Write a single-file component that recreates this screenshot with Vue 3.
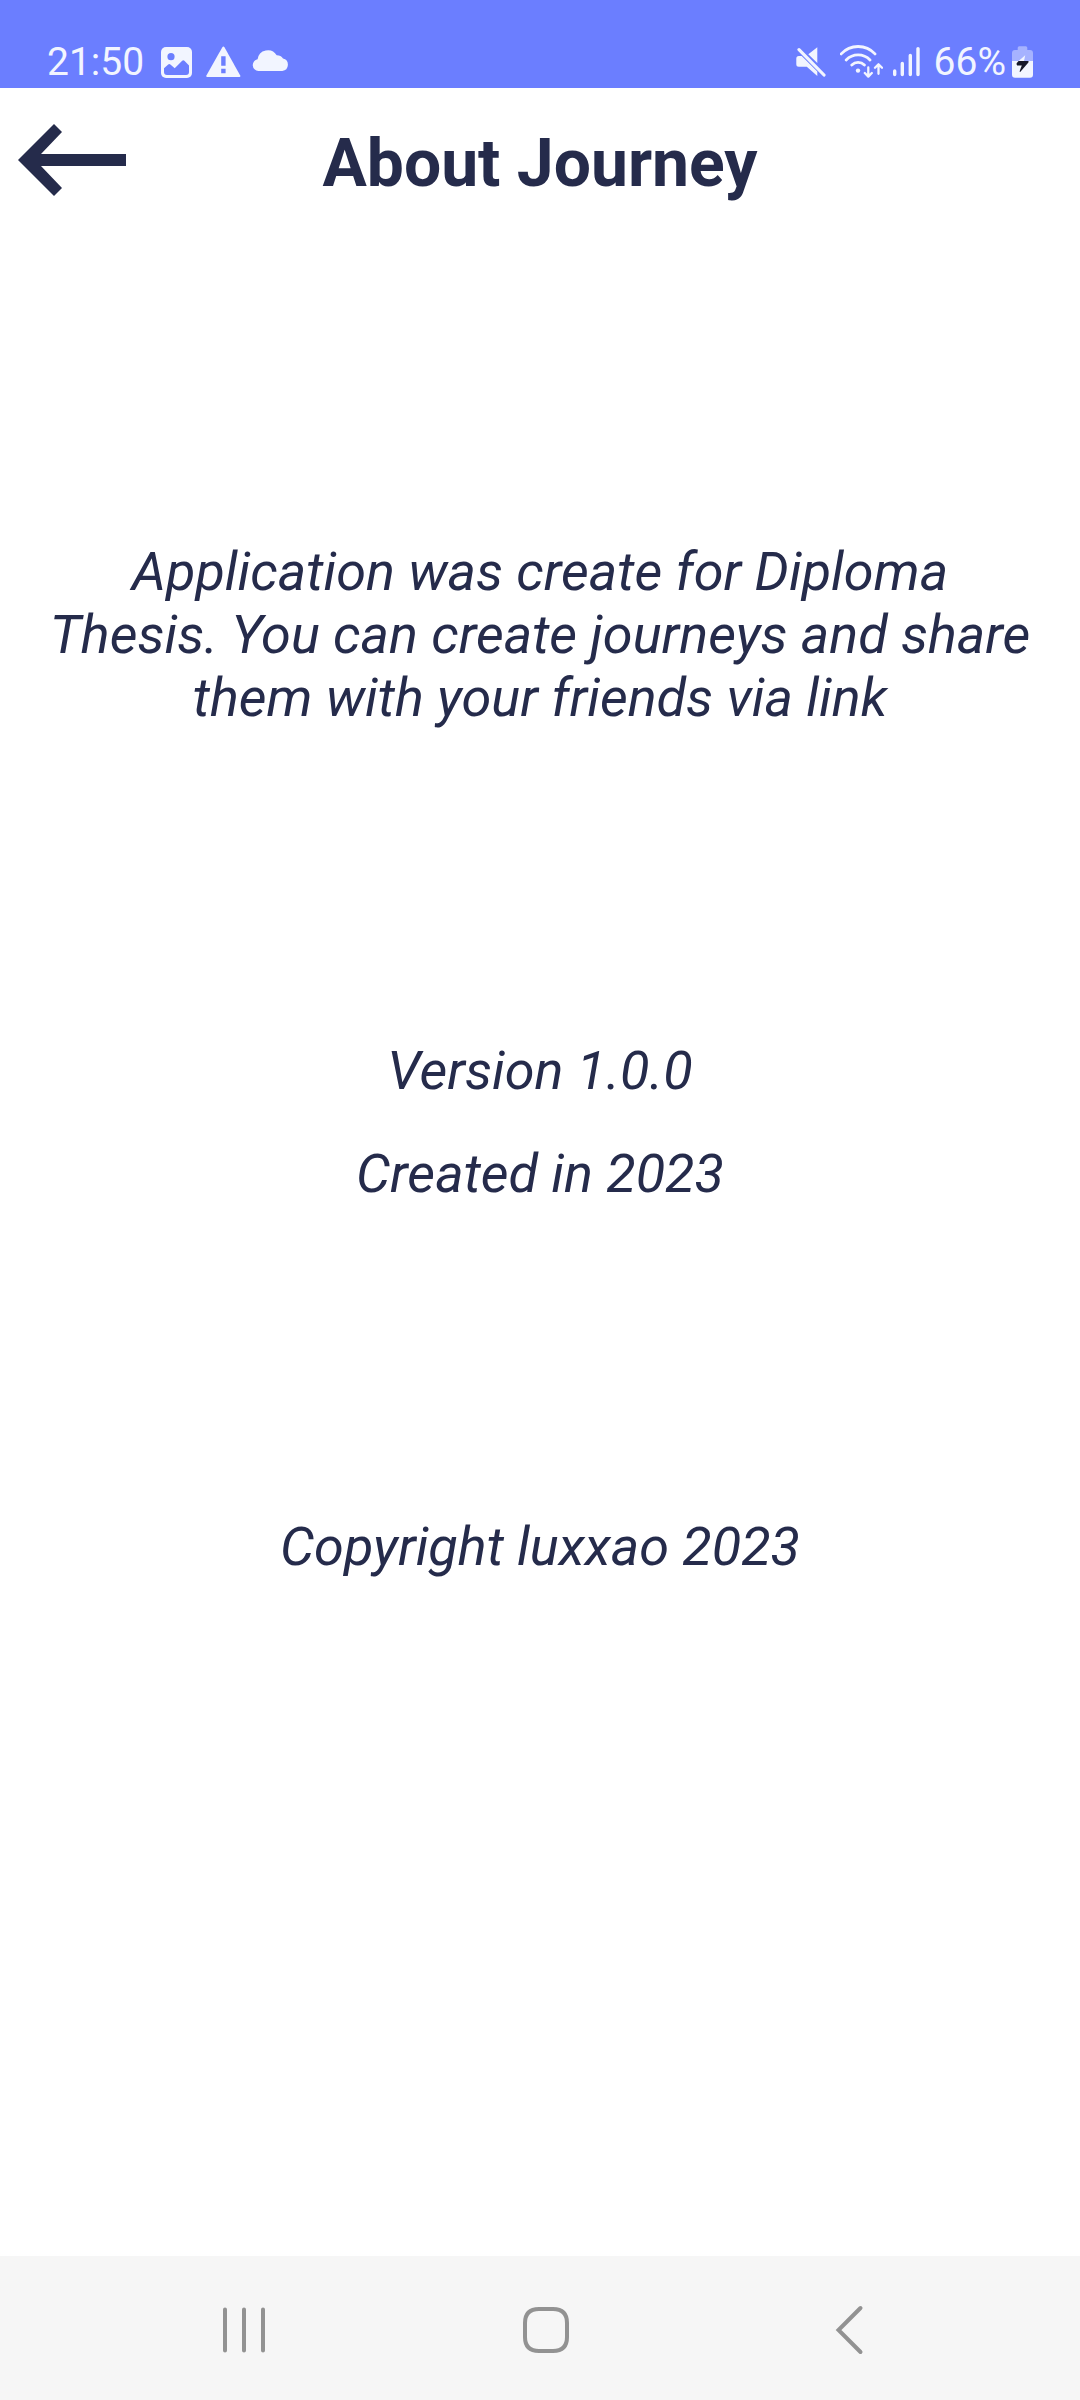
<script setup>
const facts = ['Version 1.0.0', 'Created in 2023']
</script>

<template>
  <div class="screen">
    <div class="status">
      <div class="group">
        <span class="label">21:50</span>
        <svg class="photo" width="31" height="34" viewBox="0 0 31 34" aria-hidden="true">
          <rect class="ink" y="2" width="31" height="31" rx="5" />
          <circle class="cut" cx="10" cy="11.7" r="3.6" />
          <path class="cut" d="M3 23.3 7.2 19.4Q8.3 18.4 9.4 19.4L13.7 23.3 21.2 15.8Q22.3 14.8 23.4 15.8L28 20.5V27Q28 30 25 30H6Q3 30 3 27Z" />
        </svg>
        <svg class="alert" width="35" height="34" viewBox="0 0 35 34" aria-hidden="true">
          <path class="ink" d="M16.2 2.4Q17.4.6 18.6 2.4L34.2 30.4Q34.8 32 33.4 32H1.2Q0 32 .4 30.4Z" />
          <path class="cut" d="M15.2 11.3h4.4v9.4h-4.4zM15.2 23.8h4.4v4.4h-4.4z" />
        </svg>
        <svg class="cloud" width="37" height="34" viewBox="0 0 37 34" aria-hidden="true">
          <path class="ink" d="M6.4 26A5.9 5.9 0 0 1 5.6 14.3 10.3 10.3 0 0 1 24.7 10.3 7.4 7.4 0 0 1 31 13.6 6.3 6.3 0 0 1 30.3 26Z" />
        </svg>
      </div>
      <div class="group">
        <svg width="30" height="34" viewBox="0 0 30 34" aria-hidden="true">
          <path class="ink" d="M21.3 2.3v15.6L12.3 9.3ZM2.8 11H5.7L21.3 26.4V31L10.8 21.7H2.8Q.3 21.7.3 19.2V13.5Q.3 11 2.8 11Z" />
          <path class="line" d="M3 4.6 28 30" stroke-width="3.2" />
        </svg>
        <svg class="wifi" width="43" height="34" viewBox="0 0 43 34" aria-hidden="true">
          <circle class="ink" cx="18" cy="25.6" r="2.2" />
          <path class="line" d="M1.2 8.9A23 23 0 0 1 35 8.9M6.2 15A16.5 16.5 0 0 1 30 15M11.8 20A9 9 0 0 1 24.4 20" stroke-width="2.8" />
          <path class="line" d="M28.3 22.5V31.5M24.8 28 28.3 31.6 31.8 28M38.5 28.8V19.3M35 22.8 38.5 19.2 42 22.8" stroke-width="2.3" />
        </svg>
        <svg class="signal" width="28" height="34" viewBox="0 0 28 34" aria-hidden="true">
          <path class="line" d="M2.7 26V29.6M10.3 18.4V29.6M18.3 10.4V29.6M26 3.6V29.6" stroke-width="3.4" />
        </svg>
        <span class="label level">66%</span>
        <svg class="battery" width="21" height="34" viewBox="0 0 21 34" aria-hidden="true">
          <path class="faded" d="M5.7 5V2.8Q5.7 1.3 7.2 1.3H13.8Q15.3 1.3 15.3 2.8V5H18Q21 5 21 8V16H0V8Q0 5 3 5Z" />
          <path class="ink" d="M0 16H21V29.7Q21 32.7 18 32.7H3Q0 32.7 0 29.7Z" />
          <path class="ink" d="M13.2 10.3 6.6 16H12Z" />
          <path class="bolt" d="M6.6 16H16.2Q17 16.4 16.4 17.4L8.2 27Q7.4 27 7.7 26L9.8 20.6H5.2Q4.2 19.6 4.8 18Z" />
        </svg>
      </div>
    </div>

    <header class="header">
      <button class="back" type="button" aria-label="Back">
        <svg width="108" height="72" viewBox="0 0 108 72">
          <path d="M0 36 36 0 44 8 23 30H108V42H23L44 64 36 72Z" />
        </svg>
      </button>
      <h1>About Journey</h1>
    </header>

    <main class="about">
      <p>Application was create for Diploma Thesis. You can create journeys and share them with your friends via link</p>
      <div class="facts">
        <p v-for="fact in facts" :key="fact">{{ fact }}</p>
      </div>
      <p>Copyright luxxao 2023</p>
    </main>

    <nav class="nav">
      <button type="button" aria-label="Recent apps">
        <svg width="48" height="50" viewBox="0 0 48 50"><path d="M5 4.5V45.5M24 4.5V45.5M43 4.5V45.5" /></svg>
      </button>
      <button type="button" aria-label="Home">
        <svg width="48" height="50" viewBox="0 0 48 50"><path d="M17 4H31Q45 4 45 18V32Q45 46 31 46H17Q3 46 3 32V18Q3 4 17 4Z" /></svg>
      </button>
      <button type="button" aria-label="Back">
        <svg width="48" height="50" viewBox="0 0 48 50"><path d="M35.5 3 13.5 25 35.5 47" /></svg>
      </button>
    </nav>
  </div>
</template>

<style>
body {
  margin: 0;
}
</style>

<style scoped>
.screen {
  display: flex;
  flex-direction: column;
  min-height: 100vh;
  background: #fff;
  color: #252b4b;
  font-family: Roboto, sans-serif;
}

.status {
  display: flex;
  justify-content: space-between;
  padding: 36px 47px 0;
  background: #6b7eff;
  color: #f2f5ff;
}

.group {
  display: flex;
  align-items: center;
}

.label {
  font-size: 39px;
  line-height: 52px;
}

.ink {
  fill: #f2f5ff;
}

.cut {
  fill: #6b7eff;
}

.faded {
  fill: #a6b2ff;
}

.bolt {
  fill: #16182a;
}

.line {
  fill: none;
  stroke: #f2f5ff;
  stroke-linecap: round;
  stroke-linejoin: round;
}

.photo {
  margin-left: 17px;
}

.alert,
.wifi,
.level {
  margin-left: 14px;
}

.cloud {
  margin-left: 11px;
}

.signal {
  margin-left: 9px;
}

.battery {
  margin-left: 6px;
}

button {
  display: flex;
  padding: 0;
  border: 0;
  background: none;
  cursor: pointer;
}

.header {
  display: grid;
  grid-template-columns: 1fr auto 1fr;
  align-items: center;
  height: 144px;
}

.back {
  justify-self: start;
  margin-left: 18px;
  fill: #252b4b;
}

h1 {
  margin: 0;
  padding-top: 8px;
  font-size: 66px;
  font-weight: 700;
  line-height: 78px;
}

.about {
  flex: 1;
  display: flex;
  flex-direction: column;
  gap: 310px;
  padding: 308px 44px;
  font-size: 54px;
  font-style: italic;
  line-height: 63px;
  text-align: center;
}

p {
  margin: 0;
}

.facts {
  display: flex;
  flex-direction: column;
  gap: 40px;
}

.nav {
  display: flex;
  height: 144px;
  padding: 4px 80px 0 93px;
  box-sizing: border-box;
  background: #f6f6f6;
}

.nav button {
  flex: 1;
  align-items: center;
  justify-content: center;
}

.nav path {
  fill: none;
  stroke: #929292;
  stroke-width: 4;
  stroke-linecap: round;
}
</style>
